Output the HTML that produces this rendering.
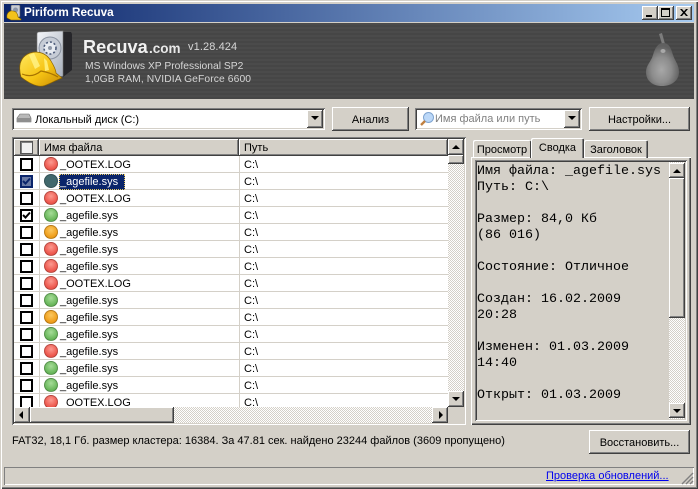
<!DOCTYPE html>
<html><head><meta charset="utf-8"><style>
*{box-sizing:border-box}
html,body{margin:0;padding:0;background:#d4d0c8}
body{width:698px;height:489px;overflow:hidden;position:relative;font:11px "Liberation Sans","DejaVu Sans",sans-serif;color:#000}
div,span,svg{position:absolute;white-space:nowrap}
.btn{background:#d4d0c8;box-shadow:inset -1px -1px 0 #404040,inset 1px 1px 0 #fff,inset -2px -2px 0 #808080;text-align:center}
.sunk{box-shadow:inset 1px 1px 0 #808080,inset -1px -1px 0 #fff,inset 2px 2px 0 #404040,inset -2px -2px 0 #d4d0c8}
.dith{background-color:#fff;background-image:conic-gradient(#d4d0c8 25%,#fff 0 50%,#d4d0c8 0 75%,#fff 0);background-size:2px 2px}
.sb{background:#d4d0c8;box-shadow:inset -1px -1px 0 #404040,inset 1px 1px 0 #fff,inset -2px -2px 0 #808080}
.up:after,.dn:after,.lf:after,.rt:after{content:"";position:absolute;width:0;height:0;border:4px solid transparent}
.up:after{left:4px;top:2px;border-bottom-color:#000}
.dn:after{left:4px;top:6px;border-top-color:#000}
.lf:after{left:1px;top:4px;border-right-color:#000}
.rt:after{left:7px;top:4px;border-left-color:#000}
.r{left:14px;width:434px;height:17px;background:#fff;border-bottom:1px solid #d4d0c8}
.c{left:6px;top:2px;width:13px;height:13px;border:2px solid #000;background:#fff}
.c svg{left:0;top:0}
.i{left:30px;top:1px;width:14px;height:14px;border-radius:50%;border:1px solid rgba(0,0,0,.22)}
.red{background:radial-gradient(circle at 50% 35%,#fb9a90,#ee5a50 65%,#dd4a40)}
.grn{background:radial-gradient(circle at 50% 35%,#a6dc98,#6cb95e 65%,#5aa84e)}
.org{background:radial-gradient(circle at 50% 35%,#fbc860,#f0a01e 65%,#dc8a10)}
.t{left:46px;top:2px;line-height:15px}
.p{left:230px;top:2px;line-height:15px}
.s{left:225px;top:0;width:1px;height:17px;background:#d4d0c8}
.s0{left:25px;top:0;width:1px;height:17px;background:#d4d0c8}
.m{left:477px;font:13.33px/16px "Liberation Mono",monospace}
</style></head><body>
<!-- window frame -->
<div style="left:0;top:0;width:698px;height:489px;box-shadow:inset 1px 1px 0 #d4d0c8,inset 2px 2px 0 #fff,inset -1px -1px 0 #404040,inset -2px -2px 0 #808080"></div>
<!-- title bar -->
<div style="left:4px;top:4px;width:690px;height:18px;background:linear-gradient(90deg,#0a246a,#a6caf0)"></div>
<svg style="left:6px;top:5px" width="16" height="16" viewBox="0 0 16 16"><rect x="5" y="0" width="9" height="12" rx="1" fill="#c8ccd4" stroke="#555" stroke-width=".6"/><circle cx="9.5" cy="5" r="2.5" fill="#8a94a8"/><path d="M1 13c-1-5 3-8 6-7 3 0 5 3 5 6l3 2v1H5z" fill="#f2c21a" stroke="#7a5a00" stroke-width=".6"/></svg>
<div style="left:24px;top:5px;font:bold 11.7px/16px 'Liberation Sans',sans-serif;color:#fff">Piriform Recuva</div>
<div class="btn" style="left:642px;top:6px;width:16px;height:14px"><div style="left:4px;top:9px;width:6px;height:2px;background:#000"></div></div>
<div class="btn" style="left:658px;top:6px;width:16px;height:14px"><div style="left:3px;top:2px;width:9px;height:9px;border:1px solid #000;border-top-width:2px"></div></div>
<div class="btn" style="left:676px;top:6px;width:16px;height:14px"><svg style="left:4px;top:3px" width="8" height="7" viewBox="0 0 8 7"><path d="M0 0h2l2 2.4L6 0h2L5 3.5 8 7H6L4 4.6 2 7H0l3-3.5z" fill="#000"/></svg></div>
<!-- header -->
<div style="left:4px;top:23px;width:690px;height:76px;background:repeating-linear-gradient(180deg,#4b4b4b 0 2px,#464646 2px 4px)"></div>
<svg style="left:18px;top:30px" width="56" height="58" viewBox="0 0 56 58">
<defs><linearGradient id="h" x1="0" y1="0" x2="1" y2="1"><stop offset="0" stop-color="#ffe860"/><stop offset=".55" stop-color="#f6c414"/><stop offset="1" stop-color="#c88a04"/></linearGradient><linearGradient id="d" x1="0" y1="0" x2="1" y2="1"><stop offset="0" stop-color="#f4f6fa"/><stop offset="1" stop-color="#a8b0bc"/></linearGradient></defs>
<path d="M44 2l9 0 1 2v36l-9 7z" fill="#26262a"/>
<path d="M19 4q0-2 2-2l24-1v45l-10 2-16-8z" fill="url(#d)" stroke="#777" stroke-width=".6"/>
<circle cx="32" cy="18" r="11" fill="#c6ccd6" stroke="#8a92a0"/><circle cx="32" cy="18" r="6" fill="#e8ecf2" stroke="#4b5a78" stroke-dasharray="2 2" stroke-width="1.6"/><circle cx="32" cy="18" r="2" fill="#8e98a8"/>
<path d="M3 47C0 36 2 27 12 23c9-3 17 1 21 8 3 5 5 10 5 12l6 5c-8 3-14 7-19 8-6 1-13-2-22-9z" fill="url(#h)" stroke="#8a6200" stroke-width=".7"/>
<path d="M11 25l5-2 6 13-5 3zM26 28l3 3 2 9-4 1z" fill="#fff284" opacity=".85"/>
<path d="M4 44c7 3 13 2 19-3 6 1 12 3 17 6" fill="none" stroke="#a87400" stroke-width="1.2"/>
</svg>
<div style="left:83px;top:35px;font:bold 18.2px/24px 'Liberation Sans',sans-serif;color:#f2f2f2">Recuva</div>
<div style="left:149px;top:40px;font:bold 13.5px/18px 'Liberation Sans',sans-serif;color:#e8e8e8">.com</div>
<div style="left:188px;top:39px;font:11px/16px 'Liberation Sans',sans-serif;color:#d6d6d6;letter-spacing:.1px">v1.28.424</div>
<div style="left:85px;top:59px;font:10.3px/16px 'Liberation Sans',sans-serif;color:#d6d6d6">MS Windows XP Professional SP2</div>
<div style="left:85px;top:72px;font:10.3px/16px 'Liberation Sans',sans-serif;color:#d6d6d6;letter-spacing:.1px">1,0GB RAM, NVIDIA GeForce 6600</div>
<svg style="left:644px;top:31px" width="38" height="58" viewBox="0 0 38 58"><defs><radialGradient id="pr" cx=".47" cy=".62" r=".55"><stop offset="0" stop-color="#a8a8a8"/><stop offset=".55" stop-color="#8c8c8c"/><stop offset="1" stop-color="#606060"/></radialGradient></defs>
<path d="M15 3l3-1 3 11h-3z" fill="#7c7c7c"/>
<path d="M19 12c6 0 8 5 10 12 2 6 6 10 6 17 0 9-8 14-17 14C9 55 2 50 2 41c0-7 5-10 7-17 2-7 5-12 10-12z" fill="url(#pr)"/>
<ellipse cx="19" cy="20" rx="2.5" ry="2" fill="#a8a8a8"/></svg>
<!-- toolbar -->
<div class="sunk" style="left:12px;top:108px;width:313px;height:22px;background:#fff"></div>
<svg style="left:16px;top:113px" width="16" height="11" viewBox="0 0 16 11"><path d="M1 5l3-4h9l2 4v4H1z" fill="#b8b8b8" stroke="#666" stroke-width=".6"/><path d="M1 5h14v4H1z" fill="#8e8e8e"/></svg>
<div style="left:35px;top:113px;line-height:15px">Локальный диск (C:)</div>
<div class="sb dn" style="left:307px;top:110px;width:16px;height:18px"></div>
<div class="btn" style="left:332px;top:107px;width:77px;height:24px;line-height:26px">Анализ</div>
<div class="sunk" style="left:415px;top:108px;width:167px;height:22px;background:#fff"></div>
<svg style="left:419px;top:111px" width="16" height="16" viewBox="0 0 16 16"><circle cx="9.5" cy="6.5" r="5" fill="#bcd8f8" stroke="#7fa4d0"/><path d="M6 10l-4 4" stroke="#c08040" stroke-width="2.4"/></svg>
<div style="left:435px;top:112px;line-height:15px;color:#808080">Имя файла или путь</div>
<div class="sb dn" style="left:564px;top:110px;width:16px;height:18px"></div>
<div class="btn" style="left:589px;top:107px;width:101px;height:24px;line-height:26px">Настройки...</div>
<!-- list -->
<div style="left:12px;top:137px;width:454px;height:288px;background:#fff;box-shadow:inset 1px 1px 0 #808080,inset -1px -1px 0 #fff,inset 2px 2px 0 #404040,inset -2px -2px 0 #d4d0c8"></div>
<div style="left:14px;top:139px;width:434px;height:268px;overflow:hidden;background:#fff">
<div class="btn" style="left:0;top:0;width:25px;height:17px"><div style="left:6px;top:2px;width:13px;height:13px;border:1px solid #555;box-shadow:inset 1px 1px 0 #808080;background:#f0f0f0"></div></div>
<div class="btn" style="left:25px;top:0;width:200px;height:17px;line-height:19px;text-align:left;text-indent:5px">Имя файла</div>
<div class="btn" style="left:225px;top:0;width:209px;height:17px;line-height:19px;text-align:left;text-indent:5px">Путь</div>
</div>
<div style="left:14px;top:156px;width:434px;height:251px;overflow:hidden;background:#fff">
<div class="r" style="left:0;top:0"><div class="s0"></div><div class="s"></div><div class="c"></div><div class="i red"></div><div class="t">_OOTEX.LOG</div><div class="p">C:\</div></div>
<div class="r" style="left:0;top:17px"><div class="s0"></div><div class="s"></div><div class="c" style="background:#6a7aa4;border-color:#0a246a"><svg width="9" height="9" viewBox="0 0 9 9"><path d="M1 4l2.5 2.5L8 1.5" fill="none" stroke="#0a246a" stroke-width="2"/></svg></div><div class="i" style="background:#41686c"></div><div style="left:45px;top:1px;width:66px;height:16px;background:#0a246a;outline:1px dotted #e8c860;outline-offset:-1px"></div><div class="t" style="color:#fff">_agefile.sys</div><div class="p">C:\</div></div>
<div class="r" style="left:0;top:34px"><div class="s0"></div><div class="s"></div><div class="c"></div><div class="i red"></div><div class="t">_OOTEX.LOG</div><div class="p">C:\</div></div>
<div class="r" style="left:0;top:51px"><div class="s0"></div><div class="s"></div><div class="c"><svg width="9" height="9" viewBox="0 0 9 9"><path d="M1 4l2.5 2.5L8 1.5" fill="none" stroke="#000" stroke-width="2"/></svg></div><div class="i grn"></div><div class="t">_agefile.sys</div><div class="p">C:\</div></div>
<div class="r" style="left:0;top:68px"><div class="s0"></div><div class="s"></div><div class="c"></div><div class="i org"></div><div class="t">_agefile.sys</div><div class="p">C:\</div></div>
<div class="r" style="left:0;top:85px"><div class="s0"></div><div class="s"></div><div class="c"></div><div class="i red"></div><div class="t">_agefile.sys</div><div class="p">C:\</div></div>
<div class="r" style="left:0;top:102px"><div class="s0"></div><div class="s"></div><div class="c"></div><div class="i red"></div><div class="t">_agefile.sys</div><div class="p">C:\</div></div>
<div class="r" style="left:0;top:119px"><div class="s0"></div><div class="s"></div><div class="c"></div><div class="i red"></div><div class="t">_OOTEX.LOG</div><div class="p">C:\</div></div>
<div class="r" style="left:0;top:136px"><div class="s0"></div><div class="s"></div><div class="c"></div><div class="i grn"></div><div class="t">_agefile.sys</div><div class="p">C:\</div></div>
<div class="r" style="left:0;top:153px"><div class="s0"></div><div class="s"></div><div class="c"></div><div class="i org"></div><div class="t">_agefile.sys</div><div class="p">C:\</div></div>
<div class="r" style="left:0;top:170px"><div class="s0"></div><div class="s"></div><div class="c"></div><div class="i grn"></div><div class="t">_agefile.sys</div><div class="p">C:\</div></div>
<div class="r" style="left:0;top:187px"><div class="s0"></div><div class="s"></div><div class="c"></div><div class="i red"></div><div class="t">_agefile.sys</div><div class="p">C:\</div></div>
<div class="r" style="left:0;top:204px"><div class="s0"></div><div class="s"></div><div class="c"></div><div class="i grn"></div><div class="t">_agefile.sys</div><div class="p">C:\</div></div>
<div class="r" style="left:0;top:221px"><div class="s0"></div><div class="s"></div><div class="c"></div><div class="i grn"></div><div class="t">_agefile.sys</div><div class="p">C:\</div></div>
<div class="r" style="left:0;top:238px"><div class="s0"></div><div class="s"></div><div class="c"></div><div class="i red"></div><div class="t" style="left:52px">OOTEX.LOG</div><div class="p">C:\</div></div>
</div>
<!-- list scrollbars -->
<div class="dith" style="left:448px;top:139px;width:16px;height:267px"></div>
<div class="sb up" style="left:448px;top:139px;width:16px;height:16px"></div>
<div class="sb" style="left:448px;top:155px;width:16px;height:9px"></div>
<div class="sb dn" style="left:448px;top:391px;width:16px;height:16px"></div>
<div class="dith" style="left:14px;top:407px;width:434px;height:16px"></div>
<div class="sb lf" style="left:14px;top:407px;width:16px;height:16px"></div>
<div class="sb" style="left:30px;top:407px;width:144px;height:16px"></div>
<div class="sb rt" style="left:432px;top:407px;width:16px;height:16px"></div>
<div style="left:448px;top:407px;width:16px;height:16px;background:#d4d0c8"></div>
<!-- tabs -->
<div style="left:471px;top:157px;width:220px;height:268px;box-shadow:inset 1px 1px 0 #fff,inset -1px -1px 0 #404040,inset -2px -2px 0 #808080"></div>
<div style="left:473px;top:140px;width:58px;height:18px;border-radius:2px 2px 0 0;box-shadow:inset 1px 1px 0 #fff,inset -1px 0 0 #404040;text-align:center;line-height:21px">Просмотр</div>
<div style="left:584px;top:140px;width:64px;height:18px;border-radius:2px 2px 0 0;box-shadow:inset 1px 1px 0 #fff,inset -1px 0 0 #404040,inset -2px 0 0 #808080;text-align:center;line-height:21px">Заголовок</div>
<div style="left:531px;top:138px;width:53px;height:20px;background:#d4d0c8;border-radius:2px 2px 0 0;box-shadow:inset 1px 1px 0 #fff,inset -1px 0 0 #404040,inset -2px 0 0 #808080;text-align:center;line-height:21px">Сводка</div>
<!-- summary box -->
<div class="sunk" style="left:475px;top:160px;width:212px;height:261px"></div>
<div class="m" style="top:164px">Имя файла: _agefile.sys</div>
<div class="m" style="top:180px">Путь: C:\</div>
<div class="m" style="top:212px">Размер: 84,0 Кб</div>
<div class="m" style="top:228px">(86 016)</div>
<div class="m" style="top:260px">Состояние: Отличное</div>
<div class="m" style="top:292px">Создан: 16.02.2009</div>
<div class="m" style="top:308px">20:28</div>
<div class="m" style="top:340px">Изменен: 01.03.2009</div>
<div class="m" style="top:356px">14:40</div>
<div class="m" style="top:388px">Открыт: 01.03.2009</div>
<div class="dith" style="left:669px;top:162px;width:16px;height:257px"></div>
<div class="sb up" style="left:669px;top:163px;width:16px;height:15px"></div>
<div class="sb" style="left:669px;top:178px;width:16px;height:140px"></div>
<div class="sb dn" style="left:669px;top:403px;width:16px;height:15px"></div>
<!-- bottom -->
<div style="left:12px;top:434px;line-height:15px">FAT32, 18,1 Гб. размер кластера: 16384. За 47.81 сек. найдено 23244 файлов (3609 пропущено)</div>
<div class="btn" style="left:589px;top:430px;width:101px;height:24px;line-height:26px">Восстановить...</div>
<div style="left:4px;top:467px;width:690px;height:18px;box-shadow:inset 1px 1px 0 #808080,inset -1px -1px 0 #fff"></div>
<div style="left:546px;top:469px;line-height:15px;color:#0000ee;text-decoration:underline">Проверка обновлений...</div>
<svg style="left:681px;top:472px" width="13" height="13" viewBox="0 0 13 13"><path d="M12 1L1 12M12 5L5 12M12 9L9 12" stroke="#808080" stroke-width="1.4"/></svg>
</body></html>
